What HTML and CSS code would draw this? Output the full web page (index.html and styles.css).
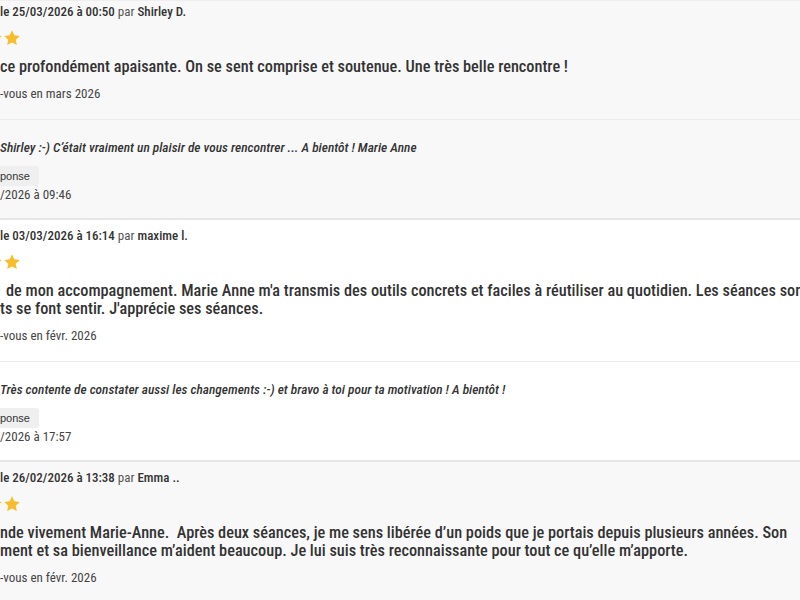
FILE: index.html
```html
<!DOCTYPE html>
<html lang="fr">
<head>
<meta charset="utf-8">
<title>Avis</title>
<link rel="stylesheet" href="styles.css">
</head>
<body>
<div class="reviews">
  <section class="review alt first">
    <div class="main">
      <p class="meta"><b>le 25/03/2026 à 00:50</b> par <b>Shirley D.</b></p>
      <div class="stars">
        <svg class="star" viewBox="0 0 24 24"><path d="M12 1.8l3.1 6.6 7.2.9-5.3 5 1.4 7.1L12 17.9l-6.4 3.5 1.4-7.1-5.3-5 7.2-.9z"/></svg>
        <svg class="star" viewBox="0 0 24 24"><path d="M12 1.8l3.1 6.6 7.2.9-5.3 5 1.4 7.1L12 17.9l-6.4 3.5 1.4-7.1-5.3-5 7.2-.9z"/></svg>
      </div>
      <p class="text">ce profondément apaisante. On se sent comprise et soutenue. Une très belle rencontre !</p>
      <p class="rdv">-vous en mars 2026</p>
    </div>
    <div class="reply">
      <p class="reply-text">Shirley :-) C’était vraiment un plaisir de vous rencontrer ... A bientôt ! Marie Anne</p>
      <span class="tag">ponse</span>
      <p class="reply-date">/2026 à 09:46</p>
    </div>
  </section>

  <section class="review">
    <div class="main">
      <p class="meta"><b>le 03/03/2026 à 16:14</b> par <b>maxime l.</b></p>
      <div class="stars">
        <svg class="star" viewBox="0 0 24 24"><path d="M12 1.8l3.1 6.6 7.2.9-5.3 5 1.4 7.1L12 17.9l-6.4 3.5 1.4-7.1-5.3-5 7.2-.9z"/></svg>
        <svg class="star" viewBox="0 0 24 24"><path d="M12 1.8l3.1 6.6 7.2.9-5.3 5 1.4 7.1L12 17.9l-6.4 3.5 1.4-7.1-5.3-5 7.2-.9z"/></svg>
      </div>
      <p class="text"><span class="lead">de mon accompagnement. Marie Anne m'a transmis des outils concrets et faciles à réutiliser au quotidien. Les séances sont</span><br>ts se font sentir. J'apprécie ses séances.</p>
      <p class="rdv">-vous en févr. 2026</p>
    </div>
    <div class="reply">
      <p class="reply-text">Très contente de constater aussi les changements :-) et bravo à toi pour ta motivation ! A bientôt !</p>
      <span class="tag">ponse</span>
      <p class="reply-date">/2026 à 17:57</p>
    </div>
  </section>

  <section class="review alt">
    <div class="main">
      <p class="meta"><b>le 26/02/2026 à 13:38</b> par <b>Emma ..</b></p>
      <div class="stars">
        <svg class="star" viewBox="0 0 24 24"><path d="M12 1.8l3.1 6.6 7.2.9-5.3 5 1.4 7.1L12 17.9l-6.4 3.5 1.4-7.1-5.3-5 7.2-.9z"/></svg>
        <svg class="star" viewBox="0 0 24 24"><path d="M12 1.8l3.1 6.6 7.2.9-5.3 5 1.4 7.1L12 17.9l-6.4 3.5 1.4-7.1-5.3-5 7.2-.9z"/></svg>
      </div>
      <p class="text">nde vivement Marie-Anne.&nbsp; Après deux séances, je me sens libérée d’un poids que je portais depuis plusieurs années. Son<br>ment et sa bienveillance m’aident beaucoup. Je lui suis très reconnaissante pour tout ce qu’elle m’apporte.</p>
      <p class="rdv">-vous en févr. 2026</p>
    </div>
  </section>
</div>
</body>
</html>
```

FILE: styles.css
```css
html, body {
  margin: 0;
  padding: 0;
  background: #ffffff;
  overflow: hidden;
}

body {
  font-family: "Roboto Condensed", "Roboto", "Liberation Sans", sans-serif;
  font-stretch: condensed;
  color: #333333;
  width: 800px;
  height: 600px;
  border-top: 1px solid #efefef;
  box-sizing: border-box;
}

p { margin: 0; }

.reviews {
  display: flex;
  flex-direction: column;
}

.review {
  background: #ffffff;
  border-bottom: 2px solid #e6e6e6;
  white-space: nowrap;
}

.review.alt { background: #f8f8f8; }

.main {
  padding: 7px 0 16px 0;
  border-bottom: 1px solid #ececec;
}

.review.first .main { padding-top: 2px; }

.meta {
  font-size: 13px;
  line-height: 18px;
  color: #555555;
}

.meta b {
  font-weight: 500;
  color: #333333;
}

.stars {
  display: flex;
  margin: 8px 0 0 -15px;
  height: 18px;
}

.star {
  width: 18px;
  height: 18px;
  fill: #f7bd2d;
}

.text {
  margin-top: 11px;
  font-size: 16.3px;
  line-height: 18px;
  font-weight: 500;
  color: #333333;
}

.lead { padding-left: 6px; }

.rdv {
  margin-top: 9px;
  font-size: 13px;
  line-height: 18px;
  color: #444444;
}

.reply {
  padding: 19px 0 14px 0;
}

.review .main:last-child { border-bottom: none; }

.reply-text {
  font-size: 13.4px;
  line-height: 18px;
  font-style: italic;
  font-weight: 500;
  color: #333333;
}

.tag {
  display: inline-block;
  margin-top: 9px;
  height: 20px;
  line-height: 20px;
  padding: 0 9px 0 0;
  background: #efefef;
  border-radius: 0 3px 3px 0;
  font-family: "Liberation Sans", Arial, sans-serif;
  font-stretch: normal;
  font-size: 11px;
  color: #333333;
}

.reply-date {
  margin-top: 0;
  font-size: 13px;
  line-height: 18px;
  color: #444444;
}
```
